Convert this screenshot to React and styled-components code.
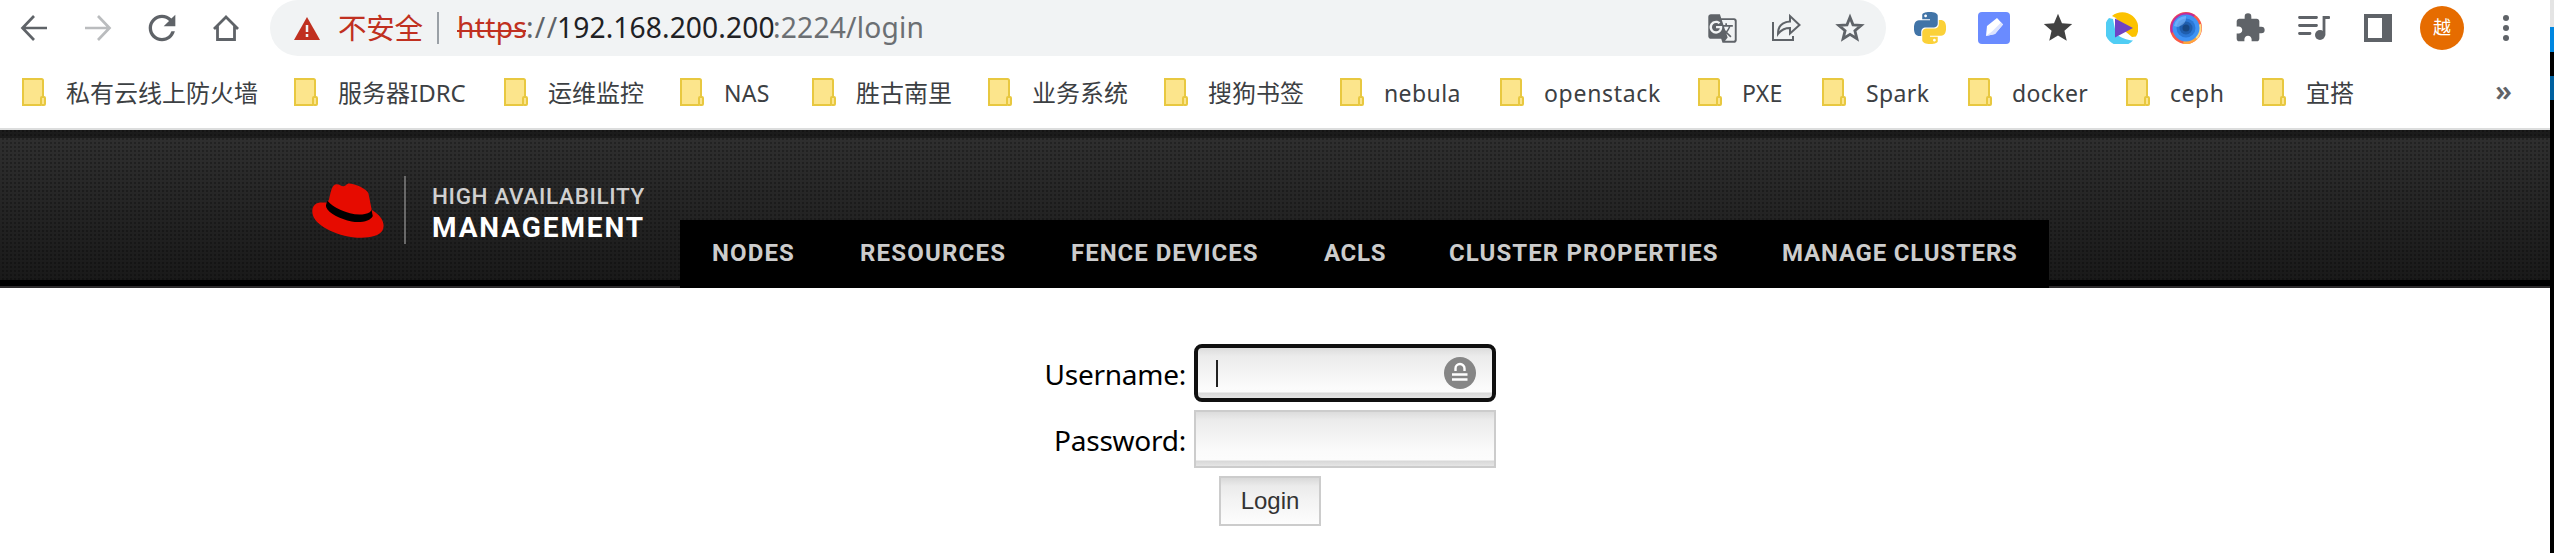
import React from 'react';
import styled, { createGlobalStyle } from 'styled-components';
import { MdGTranslate, MdStar, MdRefresh, MdExtension } from 'react-icons/md';

const GlobalStyle = createGlobalStyle`
  * { box-sizing: border-box; }
  body { margin: 0; background: #fff; overflow: hidden; }
`;

const UI_FONT = '"Noto Sans", "Noto Sans CJK SC", sans-serif';

const Screen = styled.div`
  display: flex;
  width: 2554px;
  height: 553px;
  font-family: ${UI_FONT};
`;

const Window = styled.div`
  width: 2550px;
  background: #fff;
`;

const Edge = styled.div`
  width: 4px;
  background: linear-gradient(#e4e4e4 27px, #0086e0 27px 52px, #000 52px 76px, #00609f 76px 100px, #000 100px);
`;

const Toolbar = styled.div`
  display: flex;
  align-items: center;
  height: 56px;
  padding-left: 2px;
  color: #5f6368;
`;

const IconSlot = styled.div`
  display: flex;
  flex: none;
  align-items: center;
  justify-content: center;
  width: 64px;
  height: 56px;
  color: ${(p) => p.$color || '#5f6368'};
  svg { display: block; }
`;

const Omnibox = styled.div`
  display: flex;
  align-items: center;
  width: 1616px;
  height: 56px;
  margin: 0 12px;
  padding: 0 4px 0 24px;
  border-radius: 28px;
  background: #f1f3f4;
`;

const Warning = styled.span`
  width: 87px;
  margin-left: 18px;
  color: #c03020;
  font-size: 28.5px;
  line-height: 56px;
  letter-spacing: -0.3px;
  white-space: nowrap;
`;

const Divider = styled.span`
  width: 2px;
  height: 32px;
  margin: 0 18px 0 12px;
  background: #9aa0a6;
`;

const Address = styled.div`
  display: flex;
  flex: 1;
  font-size: 28.2px;
  line-height: 52px;
  padding-bottom: 2px;
  white-space: nowrap;
`;

const UrlPart = styled.span`
  width: ${(p) => p.$w}px;
  color: ${(p) => p.$color};
  letter-spacing: ${(p) => p.$track || 0}px;
`;

const Scheme = styled(UrlPart)`
  background: linear-gradient(#c03020, #c03020) 0 29px / 69px 2px no-repeat;
`;

const Avatar = styled.div`
  width: 44px;
  height: 44px;
  border-radius: 50%;
  background: #e66c00;
  color: #fff;
  font-size: 18px;
  line-height: 43px;
  text-align: center;
`;

const BookmarkBar = styled.div`
  display: flex;
  align-items: center;
  height: 74px;
  padding-left: 22px;
  border-bottom: 2px solid #dcdddd;
`;

const Bookmark = styled.div`
  display: flex;
  align-items: center;
  gap: 20px;
  margin-right: 36px;
  svg { flex: none; }
`;

const BookmarkLabel = styled.span`
  width: ${(p) => p.$w}px;
  padding-top: 2px;
  color: #3c4043;
  font-size: ${(p) => (p.$cjk ? 24 : 23)}px;
  line-height: 36px;
  letter-spacing: ${(p) => p.$track || 0}px;
  white-space: nowrap;
`;

const Overflow = styled.span`
  margin: -4px 38px 0 auto;
  color: #5f6368;
  font-size: 29px;
  font-weight: 600;
  line-height: 36px;
`;

const Banner = styled.header`
  display: flex;
  align-items: flex-start;
  height: 158px;
  padding-left: 312px;
  background:
    linear-gradient(transparent 150px, #000 150px 156px, #2e2c2d 156px),
    linear-gradient(rgba(0, 0, 0, 0.42) 8px, transparent 8px),
    conic-gradient(rgba(0, 0, 0, 0.27) 25%, transparent 0) 0 0 / 4px 4px,
    linear-gradient(#303030, #181818);
`;

const Brand = styled.div`
  display: flex;
  width: 368px;
  padding-top: 46px;
`;

const BrandRule = styled.div`
  width: 2px;
  height: 68px;
  margin: 0 26px 0 20px;
  background: #696969;
`;

const BrandLine = styled.div`
  font-family: Roboto, sans-serif;
  font-size: ${(p) => (p.$strong ? 28 : 22.5)}px;
  font-weight: ${(p) => (p.$strong ? 700 : 500)};
  line-height: 32px;
  letter-spacing: ${(p) => p.$track}px;
  color: ${(p) => (p.$strong ? '#fff' : '#d0d0d0')};
  white-space: nowrap;
`;

const BrandText = styled.div`
  padding-top: 4px;
`;

const Nav = styled.nav`
  display: flex;
  gap: 66px;
  width: 1369px;
  height: 68px;
  margin-top: 90px;
  padding-left: 32px;
  background: #000;
`;

const NavItem = styled.a`
  width: ${(p) => p.$w}px;
  color: #ccc;
  font: 700 24px/67px Roboto, sans-serif;
  letter-spacing: ${(p) => p.$track}px;
  white-space: nowrap;
`;

const Form = styled.form`
  display: grid;
  grid-template-columns: 1186px 302px;
  column-gap: 8px;
  row-gap: 8px;
  padding-top: 56px;
`;

const Label = styled.label`
  color: #000;
  font-size: 28px;
  line-height: 60px;
  height: 58px;
  letter-spacing: -0.25px;
  text-align: right;
`;

const Field = styled.div`
  display: flex;
  align-items: center;
  justify-content: space-between;
  height: 58px;
  padding: 0 ${(p) => (p.$focused ? 16 : 18)}px;
  border: ${(p) => (p.$focused ? '4px solid #101010' : '2px solid #ccc')};
  border-radius: ${(p) => (p.$focused ? 8 : 0)}px;
  background: linear-gradient(
    #dcdcdc, #ebebeb 8px, #f1f1f1 20px, #fbfbfb 40px, #fcfcfc calc(100% - 6px),
    #d8d8d8 calc(100% - 5px), #e6e6e6 100%
  );
`;

const Caret = styled.span`
  width: 2px;
  height: 27px;
  margin-left: 2px;
  background: #222;
`;

const LoginButton = styled.button`
  grid-column: 2;
  width: 102px;
  height: 50px;
  margin-left: 25px;
  padding: 0;
  border: 2px solid #ccc;
  background: linear-gradient(#d9d9d9, #ebebeb 8px, #f3f3f3 22px, #fdfdfd);
  color: #333;
  font: 24px/44px "Liberation Sans", Arial, sans-serif;
`;

const BackIcon = ({ flip, color = '#5f6368' }) => (
  <svg width="28" height="28" viewBox="0 0 28 28" fill="none" stroke={color} strokeWidth="2.7" transform={flip ? 'scale(-1 1)' : undefined}>
    <path d="M27 14H3M14 2 2.5 14 14 26" />
  </svg>
);

const HomeIcon = () => (
  <svg width="28" height="28" viewBox="0 0 28 28" fill="none" stroke="#5f6368" strokeWidth="2.8">
    <path d="M2 15 14 3l12 12M5.5 12v13.5h17V12" />
  </svg>
);

const WarningIcon = () => (
  <svg width="26" height="23" viewBox="0 0 26 23">
    <path d="M13 0 26 23H0Z" fill="#c03020" />
    <path d="M13 8v7M13 17v3" stroke="#f1f3f4" strokeWidth="2.5" />
  </svg>
);

const ShareIcon = () => (
  <svg width="32" height="30" viewBox="0 0 32 30" fill="none" stroke="#5f6368" strokeWidth="2">
    <path d="M3 9v18h20v-4" />
    <path d="M8 21C8 13 13 9 20 8.500V3l9.500 9L20 20.500V15c-6 0-9 2-12 6Z" />
  </svg>
);

const StarOutlineIcon = () => (
  <svg width="32" height="32" viewBox="0 0 32 32" fill="none" stroke="#5f6368" strokeWidth="2.8">
    <path d="M16 5.200 19 12.800 27.200 13.400 20.900 18.700 22.900 26.600 16 22.300 9.100 26.600 11.100 18.700 4.800 13.400 13 12.800Z" />
  </svg>
);

const PYTHON_SNAKE =
  'M14.25.18l.9.2.73.26.59.3.45.32.34.34.25.34.16.33.1.3.04.26.02.2-.01.13V8.5l-.05.63-.13.55-.21.46-.26.38-.3.31-.33.25-.35.19-.35.14-.33.1-.3.07-.26.04-.21.02H8.77l-.69.05-.59.14-.5.22-.41.27-.33.32-.27.35-.2.36-.15.37-.1.35-.07.32-.04.27-.02.21v3.06H3.17l-.21-.03-.28-.07-.32-.12-.35-.18-.36-.26-.36-.36-.35-.46-.32-.59-.28-.73-.21-.88-.14-1.05-.05-1.23.06-1.22.16-1.04.24-.87.32-.71.36-.57.4-.44.42-.33.42-.24.4-.16.36-.1.32-.05.24-.01h.16l.06.01h8.16v-.83H6.18l-.01-2.75-.02-.37.05-.34.11-.31.17-.28.25-.26.31-.23.38-.2.44-.18.51-.15.58-.12.64-.1.71-.06.77-.04.84-.02 1.27.05zm-6.3 1.98l-.23.33-.08.41.08.41.23.34.33.22.41.09.41-.09.33-.22.23-.34.08-.41-.08-.41-.23-.33-.33-.22-.41-.09-.41.09z';

const PythonIcon = () => (
  <svg width="32" height="32" viewBox="0 0 24 24">
    <path d={PYTHON_SNAKE} fill="#4174a7" />
    <path d={PYTHON_SNAKE} fill="#fbd138" transform="rotate(180 12 12)" />
  </svg>
);

const NoteIcon = () => (
  <svg width="32" height="32" viewBox="0 0 32 32">
    <rect width="32" height="32" rx="4" fill="#6a8bff" />
    <path d="M8 24 9 14 19 6l6 6.500-8 9.500Z" fill="#fff" />
    <path d="m8 24 9-2 8-9.500-2-2-9 9Z" fill="#dce3ff" />
  </svg>
);

const PlayIcon = () => (
  <svg width="32" height="32" viewBox="0 0 32 32">
    <path d="M6 4A16 16 0 0 1 30 24.500L26 25 14 15 10 6Z" fill="#fcc200" />
    <path d="M3 6A16 16 0 0 0 27 28.500C20 28 16 26 10 22L7 7Z" fill="#50cdf4" />
    <path d="M9 6.500 27 16 9 25.500Z" fill="#6f43c5" />
  </svg>
);

const LensIcon = () => (
  <svg width="32" height="32" viewBox="0 0 32 32">
    <circle cx="16" cy="16" r="16" fill="#fb5a45" />
    <path d="M1 21A16 16 0 0 1 25 3L16 16Z" fill="#c12c9b" />
    <path d="M16 16 31 12A16 16 0 0 1 25 29Z" fill="#ffdc83" />
    <path d="M16 16 27 27A16 16 0 0 1 13 32Z" fill="#ffa53d" />
    <circle cx="16" cy="16" r="13.500" fill="#3f93f5" />
    <circle cx="16" cy="16" r="9.500" fill="#2b77d5" />
    <circle cx="16" cy="16" r="6.500" fill="#1f5eae" />
    <circle cx="16" cy="16" r="3.500" fill="#174783" />
    <path d="M4 14A12 12 0 0 1 16 4q1 8-8 11Z" fill="#8ec5ff" opacity=".55" />
  </svg>
);

const QueueIcon = () => (
  <svg width="32" height="28" viewBox="0 0 32 28" fill="none" stroke="#5f6368" strokeWidth="2.8" strokeLinecap="round">
    <path d="M1.500 3.500H18.500M1.500 11.500H18.500M1.500 19.500H12M26 21V3.500h5" />
    <circle cx="22" cy="21" r="5" fill="#5f6368" stroke="none" />
  </svg>
);

const PanelIcon = () => (
  <svg width="28" height="28" viewBox="0 0 28 28">
    <path d="M0 0h28v28H0ZM4 4v20h14V4Z" fill="#5f6368" fillRule="evenodd" />
  </svg>
);

const MenuIcon = () => (
  <svg width="6" height="28" viewBox="0 0 6 28" fill="#5f6368">
    <circle cx="3" cy="4" r="3" />
    <circle cx="3" cy="14" r="3" />
    <circle cx="3" cy="24" r="3" />
  </svg>
);

const FolderIcon = () => (
  <svg width="24" height="28" viewBox="0 0 24 28" fill="#fce58c" stroke="#e8c840" strokeWidth="2">
    <path d="M1 1h19v18l-1 8H1Z" stroke="none" />
    <path d="M21 19V2.500Q21 1 19.500 1H1v26h18" />
    <rect x="19" y="19" width="4" height="8" rx="1" />
  </svg>
);

const HatIcon = () => (
  <svg width="72" height="68" viewBox="95 168 218 204">
    <path fill="#e60b00" d="M118 247C100 250 93 265 97 283C103 312 150 337 190 347C235 358 290 358 308 333C320 310 302 284 276 270L266 220C262 207 225 190 207 190C200 190 198 198 190 198C182 198 178 191 168 192C155 193 152 215 146 240L140 247Z" />
    <path d="M142 242C160 265 215 290 255 282C268 280 275 275 275 268L279 288C272 303 245 310 215 305C180 298 145 280 138 262C136 255 139 248 142 242Z" />
  </svg>
);

const LockBadge = () => (
  <svg width="32" height="32" viewBox="0 0 32 32">
    <circle cx="16" cy="16" r="16" fill="#868686" />
    <path d="M11.500 14v-2.500a4.500 4.500 0 0 1 9 0V14M8 17.500h15.500M8 22.500h15.500" fill="none" stroke="#fff" strokeWidth="2.400" />
  </svg>
);

const BOOKMARKS = [
  { text: '私有云线上防火墙', w: 192, cjk: true },
  { text: '服务器IDRC', w: 130, cjk: true },
  { text: '运维监控', w: 96, cjk: true },
  { text: 'NAS', w: 52, track: 0.3 },
  { text: '胜古南里', w: 96, cjk: true },
  { text: '业务系统', w: 96, cjk: true },
  { text: '搜狗书签', w: 96, cjk: true },
  { text: 'nebula', w: 80, track: 0.4 },
  { text: 'openstack', w: 118, track: 0.7 },
  { text: 'PXE', w: 44, track: 0.3 },
  { text: 'Spark', w: 66, track: 0.4 },
  { text: 'docker', w: 78, track: 0.4 },
  { text: 'ceph', w: 56, track: 0.5 },
  { text: '宜搭', w: 48, cjk: true },
];

const NAV_ITEMS = [
  { text: 'NODES', w: 82, track: 1.1 },
  { text: 'RESOURCES', w: 145, track: 1.2 },
  { text: 'FENCE DEVICES', w: 187, track: 1 },
  { text: 'ACLS', w: 59, track: 0.7 },
  { text: 'CLUSTER PROPERTIES', w: 267, track: 1.1 },
  { text: 'MANAGE CLUSTERS', w: 233, track: 0.8 },
];

export default function App() {
  return (
    <Screen>
      <GlobalStyle />
      <Window>
        <Toolbar>
          <IconSlot><BackIcon /></IconSlot>
          <IconSlot><BackIcon flip color="#babcbe" /></IconSlot>
          <IconSlot><MdRefresh size={40} /></IconSlot>
          <IconSlot><HomeIcon /></IconSlot>
          <Omnibox>
            <WarningIcon />
            <Warning>不安全</Warning>
            <Divider />
            <Address>
              <Scheme $w={69} $color="#c03020" $track={0.3}>https</Scheme>
              <UrlPart $w={31} $color="#5f6368" $track={1.3}>://</UrlPart>
              <UrlPart $w={216} $color="#202124" $track={0.1}>192.168.200.200</UrlPart>
              <UrlPart $w={154} $color="#6b6f73" $track={0.2}>:2224/login</UrlPart>
            </Address>
            <IconSlot><MdGTranslate size={31} /></IconSlot>
            <IconSlot><ShareIcon /></IconSlot>
            <IconSlot><StarOutlineIcon /></IconSlot>
          </Omnibox>
          <IconSlot><PythonIcon /></IconSlot>
          <IconSlot><NoteIcon /></IconSlot>
          <IconSlot $color="#414141"><MdStar size={34} /></IconSlot>
          <IconSlot><PlayIcon /></IconSlot>
          <IconSlot><LensIcon /></IconSlot>
          <IconSlot><MdExtension size={32} /></IconSlot>
          <IconSlot><QueueIcon /></IconSlot>
          <IconSlot><PanelIcon /></IconSlot>
          <IconSlot><Avatar>越</Avatar></IconSlot>
          <IconSlot><MenuIcon /></IconSlot>
        </Toolbar>
        <BookmarkBar>
          {BOOKMARKS.map((b) => (
            <Bookmark key={b.text}>
              <FolderIcon />
              <BookmarkLabel $w={b.w} $cjk={b.cjk} $track={b.track}>{b.text}</BookmarkLabel>
            </Bookmark>
          ))}
          <Overflow>»</Overflow>
        </BookmarkBar>
        <Banner>
          <Brand>
            <HatIcon />
            <BrandRule />
            <BrandText>
              <BrandLine $track={0.65}>HIGH AVAILABILITY</BrandLine>
              <BrandLine $strong $track={1.9}>MANAGEMENT</BrandLine>
            </BrandText>
          </Brand>
          <Nav>
            {NAV_ITEMS.map((n) => (
              <NavItem key={n.text} $w={n.w} $track={n.track}>{n.text}</NavItem>
            ))}
          </Nav>
        </Banner>
        <Form>
          <Label>Username:</Label>
          <Field $focused><Caret /><LockBadge /></Field>
          <Label>Password:</Label>
          <Field />
          <LoginButton type="button">Login</LoginButton>
        </Form>
      </Window>
      <Edge />
    </Screen>
  );
}
